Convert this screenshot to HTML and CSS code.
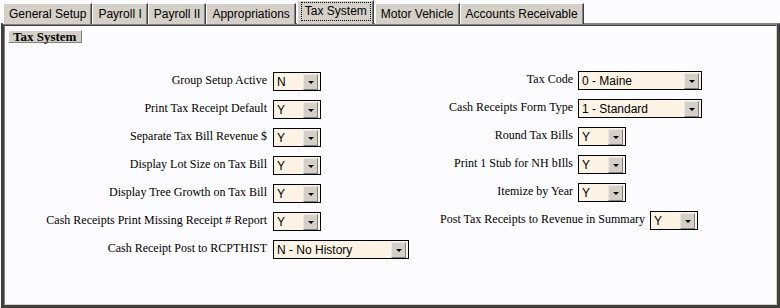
FILE: index.html
```html
<!DOCTYPE html>
<html>
<head>
<meta charset="utf-8">
<link rel="stylesheet" href="styles.css">
</head>
<body>
<div class="window">
  <div class="tabs">
    <div class="tab">General Setup</div>
    <div class="tab">Payroll I</div>
    <div class="tab">Payroll II</div>
    <div class="tab">Appropriations</div>
    <div class="tab active"><span class="focus">Tax System</span></div>
    <div class="tab">Motor Vehicle</div>
    <div class="tab">Accounts Receivable</div>
  </div>
  <div class="panel">
    <div class="panel-inner">
      <div class="section-title">Tax System</div>
      <div class="form">
        <div class="col col-left">
          <div class="row"><span class="label">Group Setup Active</span><div class="combo combo-sm"><span class="combo-value">N</span><span class="combo-btn"></span></div></div>
          <div class="row"><span class="label">Print Tax Receipt Default</span><div class="combo combo-sm"><span class="combo-value">Y</span><span class="combo-btn"></span></div></div>
          <div class="row"><span class="label">Separate Tax Bill Revenue $</span><div class="combo combo-sm"><span class="combo-value">Y</span><span class="combo-btn"></span></div></div>
          <div class="row"><span class="label">Display Lot Size on Tax Bill</span><div class="combo combo-sm"><span class="combo-value">Y</span><span class="combo-btn"></span></div></div>
          <div class="row"><span class="label">Display Tree Growth on Tax Bill</span><div class="combo combo-sm"><span class="combo-value">Y</span><span class="combo-btn"></span></div></div>
          <div class="row"><span class="label">Cash Receipts Print Missing Receipt # Report</span><div class="combo combo-sm"><span class="combo-value">Y</span><span class="combo-btn"></span></div></div>
          <div class="row"><span class="label">Cash Receipt Post to RCPTHIST</span><div class="combo combo-lg"><span class="combo-value">N - No History</span><span class="combo-btn"></span></div></div>
        </div>
        <div class="col col-right">
          <div class="row"><span class="label">Tax Code</span><div class="combo combo-md"><span class="combo-value">0 - Maine</span><span class="combo-btn"></span></div></div>
          <div class="row"><span class="label">Cash Receipts Form Type</span><div class="combo combo-md"><span class="combo-value">1 - Standard</span><span class="combo-btn"></span></div></div>
          <div class="row"><span class="label">Round Tax Bills</span><div class="combo combo-sm"><span class="combo-value">Y</span><span class="combo-btn"></span></div></div>
          <div class="row"><span class="label">Print 1 Stub for NH bIlls</span><div class="combo combo-sm"><span class="combo-value">Y</span><span class="combo-btn"></span></div></div>
          <div class="row"><span class="label">Itemize by Year</span><div class="combo combo-sm"><span class="combo-value">Y</span><span class="combo-btn"></span></div></div>
          <div class="row row-wide"><span class="label">Post Tax Receipts to Revenue in Summary</span><div class="combo combo-sm"><span class="combo-value">Y</span><span class="combo-btn"></span></div></div>
        </div>
      </div>
    </div>
  </div>
</div>
</body>
</html>
```

FILE: styles.css
```css
html, body {
  margin: 0;
  padding: 0;
  background: #fcfbfe;
}

.window {
  width: 780px;
  height: 308px;
  box-sizing: border-box;
  padding: 1px 0 0 1px;
  display: flex;
  flex-direction: column;
}

.tabs {
  display: flex;
  align-items: flex-end;
  height: 23px;
  padding-left: 2px;
  position: relative;
  z-index: 2;
  margin-bottom: -1px;
}

.tab {
  box-sizing: border-box;
  height: 21px;
  padding: 2px 5px 0 5px;
  background: #d4d0c8;
  border-top: 1px solid #ffffff;
  border-left: 1px solid #ffffff;
  border-right: 1px solid #404040;
  box-shadow: inset -1px 0 0 #808080;
  font-family: "Liberation Sans", Arial, sans-serif;
  font-size: 12px;
  line-height: 16px;
  color: #000;
  white-space: nowrap;
}

.tab.active {
  height: 24px;
  margin: 0 1px 0 1px;
  padding: 1px 2px 0 3px;
  background: #d4d0c8;
}

.tab.active .focus {
  display: block;
  border: 1px dotted #000;
  padding: 0 3px 1px 3px;
  line-height: 16px;
}

.panel {
  flex: 1;
  border-style: solid;
  border-width: 2px 3px 3px 3px;
  border-color: #808080 #404040 #404040 #404040;
  background: #fcfbfe;
  display: flex;
}

.panel-inner {
  flex: 1;
  border-style: solid;
  border-width: 1px;
  border-color: #404040 #d4d0c8 #d4d0c8 #808080;
  padding: 4px 0 0 3px;
}

.section-title {
  width: fit-content;
  box-sizing: border-box;
  height: 13px;
  padding: 0 5px 0 4px;
  background: #d4d0c8;
  border-top: 1px solid #ffffff;
  border-left: 1px solid #ffffff;
  border-right: 1px solid #808080;
  border-bottom: 1px solid #808080;
  font-family: "Liberation Serif", "Times New Roman", serif;
  font-weight: bold;
  font-size: 13px;
  line-height: 11px;
  color: #000;
}

.form {
  display: grid;
  grid-template-columns: 414px 1fr;
  margin-top: 29px;
  margin-left: -3px;
}

.col {
  display: flex;
  flex-direction: column;
  gap: 9px;
}

.col-right {
  margin-top: -1px;
}

.row {
  display: flex;
  align-items: flex-start;
  height: 19px;
}

.label {
  box-sizing: border-box;
  text-align: right;
  font-family: "Liberation Serif", "Times New Roman", serif;
  font-size: 12px;
  line-height: 14px;
  color: #000;
  white-space: nowrap;
  padding-top: 1px;
}

.col-left .label {
  width: 262px;
  margin-right: 6px;
}

.col-right .label {
  width: 154px;
  margin-right: 5px;
}

.col-right .row-wide .label {
  width: 226px;
}

.combo {
  box-sizing: border-box;
  height: 19px;
  border: 1px solid #000;
  background: #fcf3e4;
  display: flex;
  align-items: flex-start;
  padding: 1px 1px 0 3px;
}

.combo-sm { width: 48px; }
.combo-md { width: 124px; }
.combo-lg { width: 136px; }

.combo-value {
  flex: 1;
  font-family: "Liberation Sans", Arial, sans-serif;
  font-size: 12px;
  line-height: 15px;
  padding-top: 1px;
  color: #000;
  white-space: nowrap;
}

.combo-btn {
  box-sizing: border-box;
  width: 15px;
  height: 16px;
  background: #d4d0c8;
  border: 1px solid;
  border-color: #e8e8e8 #808080 #808080 #e8e8e8;
  position: relative;
  margin-right: 1px;
}

.combo-btn::after {
  content: "";
  position: absolute;
  left: 4px;
  top: 6px;
  border-left: 3px solid transparent;
  border-right: 3px solid transparent;
  border-top: 3px solid #000;
}
```
